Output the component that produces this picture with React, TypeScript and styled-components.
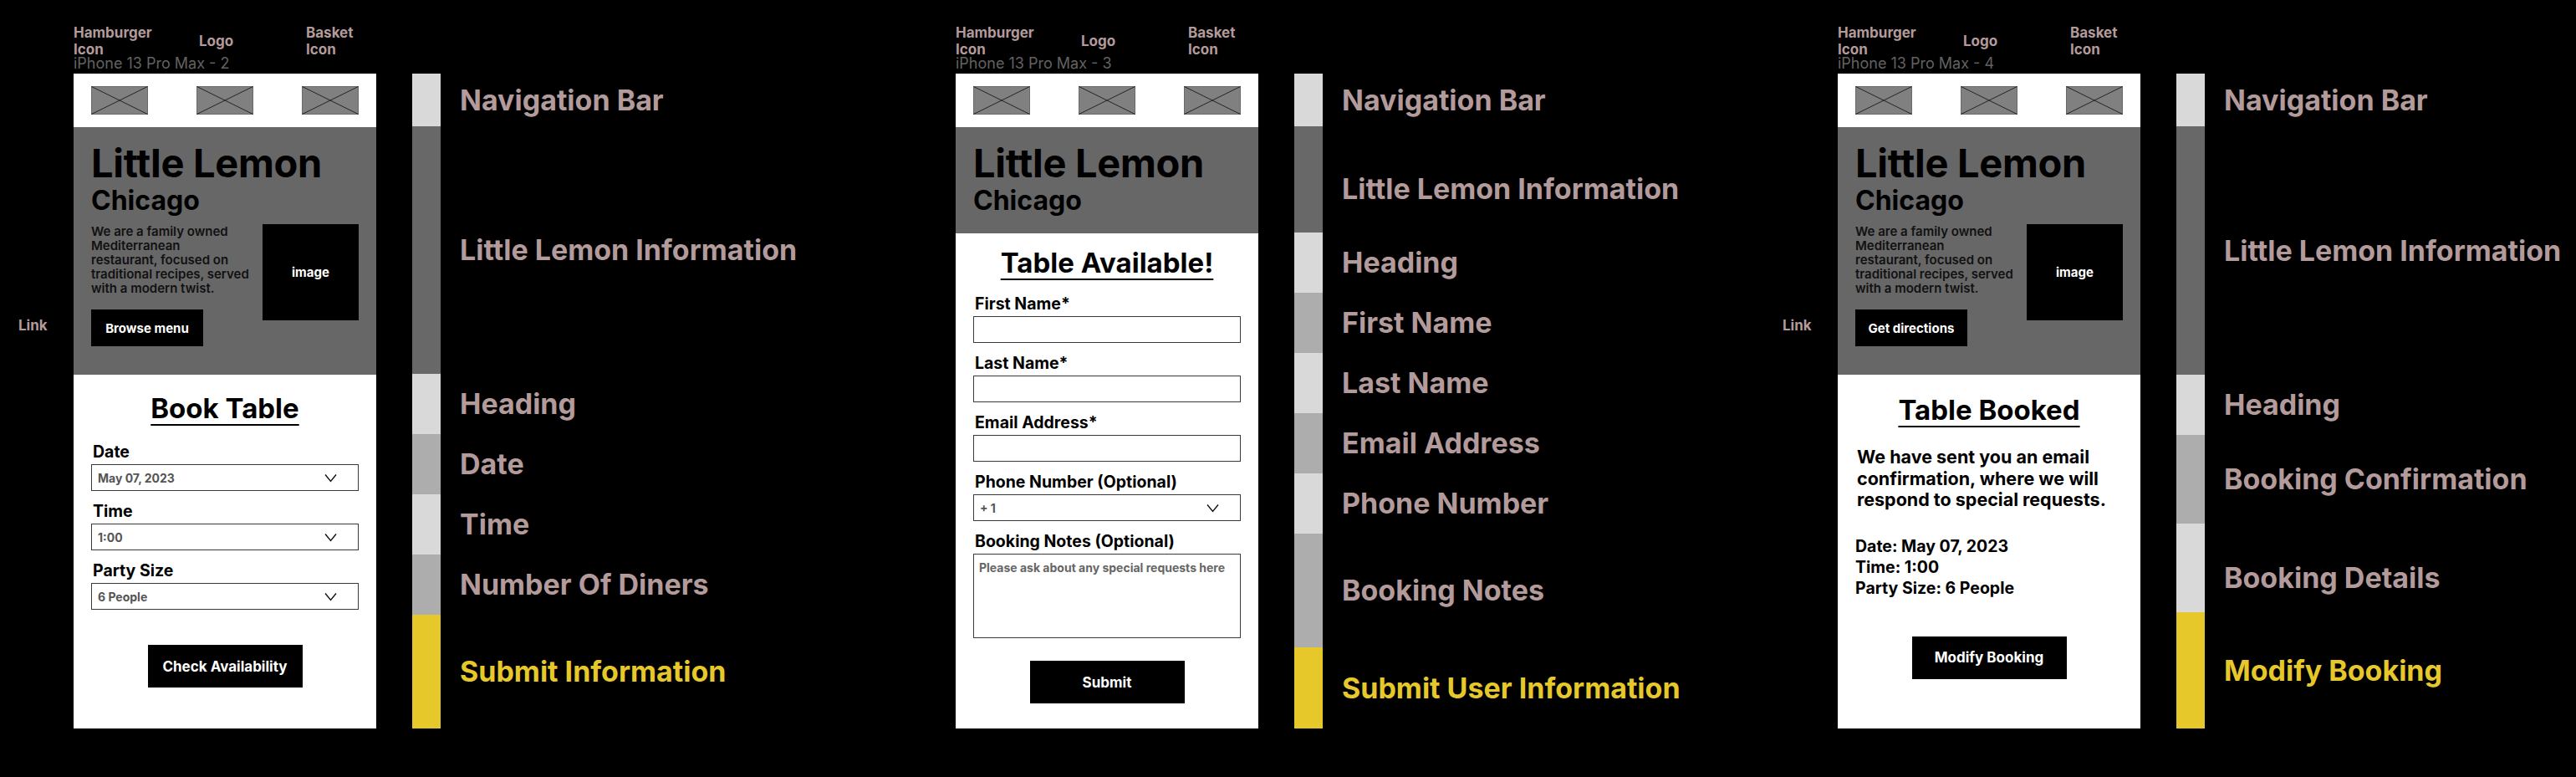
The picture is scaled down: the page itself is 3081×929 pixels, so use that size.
import React from "react";
import styled, { createGlobalStyle } from "styled-components";

const LABEL = "#b39a9b";
const YELLOW = "#e6c82b";
const LIGHT = "#d9d9d9";
const DARK = "#686868";
const MID = "#adadad";

const GlobalStyle = createGlobalStyle`
  html, body {
    margin: 0;
    padding: 0;
    background: #000;
  }
  body {
    font-family: Inter, "Noto Sans", Arial, sans-serif;
    overflow: hidden;
  }
  * {
    box-sizing: border-box;
  }
`;

// shift: how far the label sits below the middle of its segment
type Segment = { label: string; height: number; color: string; accent?: boolean; shift?: number };

const legends: Segment[][] = [
  [
    { label: "Navigation Bar", height: 63, color: LIGHT },
    { label: "Little Lemon Information", height: 296, color: DARK },
    { label: "Heading", height: 72, color: LIGHT },
    { label: "Date", height: 72, color: MID },
    { label: "Time", height: 72, color: LIGHT },
    { label: "Number Of Diners", height: 72, color: MID },
    { label: "Submit Information", height: 136, color: YELLOW, accent: true },
  ],
  [
    { label: "Navigation Bar", height: 63, color: LIGHT },
    { label: "Little Lemon Information", height: 127, color: DARK, shift: 11 },
    { label: "Heading", height: 72, color: LIGHT },
    { label: "First Name", height: 72, color: MID },
    { label: "Last Name", height: 72, color: LIGHT },
    { label: "Email Address", height: 72, color: MID },
    { label: "Phone Number", height: 72, color: LIGHT },
    { label: "Booking Notes", height: 136, color: MID },
    { label: "Submit User Information", height: 97, color: YELLOW, accent: true },
  ],
  [
    { label: "Navigation Bar", height: 63, color: LIGHT },
    { label: "Little Lemon Information", height: 297, color: DARK },
    { label: "Heading", height: 72, color: LIGHT },
    { label: "Booking Confirmation", height: 106, color: MID },
    { label: "Booking Details", height: 106, color: LIGHT, shift: 12 },
    { label: "Modify Booking", height: 139, color: YELLOW, accent: true },
  ],
];

const Placeholder = () => (
  <svg width="68" height="34" viewBox="0 0 68 34">
    <rect x="0.5" y="0.5" width="67" height="33" fill="#808080" stroke="#6a6a6a" />
    <line x1="0.5" y1="0.5" x2="67.5" y2="33.5" stroke="#1a1a1a" strokeWidth="0.9" />
    <line x1="67.5" y1="0.5" x2="0.5" y2="33.5" stroke="#1a1a1a" strokeWidth="0.9" />
  </svg>
);

const Chevron = () => (
  <svg width="15" height="11" viewBox="0 0 15 11">
    <path d="M1 1.5 L7.5 9.5 L14 1.5" fill="none" stroke="#111" strokeWidth="1.4" />
  </svg>
);

const Header = ({ index }: { index: number }) => (
  <HeaderArea>
    <Annotations>
      <span>{"Hamburger\nIcon"}</span>
      <span>Logo</span>
      <span>{"Basket\nIcon"}</span>
    </Annotations>
    <FrameName>iPhone 13 Pro Max - {index}</FrameName>
  </HeaderArea>
);

const Nav = () => (
  <NavBar>
    <Placeholder />
    <Placeholder />
    <Placeholder />
  </NavBar>
);

const FullHero = ({ action }: { action: string }) => (
  <Hero $pb={34}>
    <Title>Little Lemon</Title>
    <City>Chicago</City>
    <HeroRow>
      <HeroText>
        <Blurb>
          We are a family owned
          <br />
          Mediterranean
          <br />
          restaurant, focused on
          <br />
          traditional recipes, served
          <br />
          with a modern twist.
        </Blurb>
        <HeroButton>{action}</HeroButton>
      </HeroText>
      <ImageBox>image</ImageBox>
    </HeroRow>
  </Hero>
);

const SelectField = ({ label, value }: { label: string; value: string }) => (
  <Field>
    <FieldLabel>{label}</FieldLabel>
    <InputBox>
      <span>{value}</span>
      <Chevron />
    </InputBox>
  </Field>
);

const TextField = ({ label }: { label: string }) => (
  <Field>
    <FieldLabel>{label}</FieldLabel>
    <InputBox />
  </Field>
);

const Legend = ({ items }: { items: Segment[] }) => (
  <LegendList>
    {items.map((item) => (
      <LegendItem key={item.label} $h={item.height}>
        <Swatch $color={item.color} />
        <LegendText $accent={item.accent} $shift={item.shift ?? 0}>
          {item.label}
        </LegendText>
      </LegendItem>
    ))}
  </LegendList>
);

const App = () => {
  return (
    <>
      <GlobalStyle />
      <Page>
        {/* Book table */}
        <Board>
          <LinkSlot>Link</LinkSlot>
          <FrameColumn>
            <Header index={2} />
            <Frame>
              <Nav />
              <FullHero action="Browse menu" />
              <Content $pt={20}>
                <Heading>Book Table</Heading>
                <Fields $mt={21}>
                  <SelectField label="Date" value="May 07, 2023" />
                  <SelectField label="Time" value="1:00" />
                  <SelectField label="Party Size" value="6 People" />
                </Fields>
                <ActionButton $mt={42}>Check Availability</ActionButton>
              </Content>
            </Frame>
          </FrameColumn>
          <Legend items={legends[0]} />
        </Board>

        {/* Details form */}
        <Board>
          <LinkSlot />
          <FrameColumn>
            <Header index={3} />
            <Frame>
              <Nav />
              <Hero $pb={23}>
                <Title>Little Lemon</Title>
                <City>Chicago</City>
              </Hero>
              <Content $pt={15}>
                <Heading>Table Available!</Heading>
                <Fields $mt={18}>
                  <TextField label="First Name*" />
                  <TextField label="Last Name*" />
                  <TextField label="Email Address*" />
                  <SelectField label="Phone Number (Optional)" value="+ 1" />
                  <Field>
                    <FieldLabel>Booking Notes (Optional)</FieldLabel>
                    <NotesBox>Please ask about any special requests here</NotesBox>
                  </Field>
                </Fields>
                <ActionButton $mt={27}>Submit</ActionButton>
              </Content>
            </Frame>
          </FrameColumn>
          <Legend items={legends[1]} />
        </Board>

        {/* Confirmation */}
        <Board>
          <LinkSlot>Link</LinkSlot>
          <FrameColumn>
            <Header index={4} />
            <Frame>
              <Nav />
              <FullHero action="Get directions" />
              <Content $pt={22}>
                <Heading>Table Booked</Heading>
                <Confirmation>
                  We have sent you an email confirmation, where we will respond
                  to special requests.
                </Confirmation>
                <Details>
                  Date: May 07, 2023
                  <br />
                  Time: 1:00
                  <br />
                  Party Size: 6 People
                </Details>
                <ActionButton $mt={45}>Modify Booking</ActionButton>
              </Content>
            </Frame>
          </FrameColumn>
          <Legend items={legends[2]} />
        </Board>
      </Page>
    </>
  );
};

const Page = styled.main`
  display: flex;
  width: 3081px;
  height: 929px;
  padding-left: 22px;
  overflow: hidden;
`;

const Board = styled.section`
  flex: 0 0 1055px;
  display: flex;
  align-items: flex-start;
`;

const LinkSlot = styled.div`
  flex: 0 0 66px;
  padding-top: 379px;
  font-size: 17px;
  font-weight: 700;
  line-height: 20px;
  color: ${LABEL};
`;

const FrameColumn = styled.div`
  flex: 0 0 362px;
  display: flex;
  flex-direction: column;
`;

const HeaderArea = styled.header`
  height: 88px;
  display: grid;
  & > * {
    grid-area: 1 / 1;
  }
`;

const Annotations = styled.div`
  align-self: start;
  display: grid;
  grid-template-columns: 150px 128px 1fr;
  align-items: center;
  padding-top: 29px;
  font-size: 17px;
  font-weight: 700;
  line-height: 20px;
  color: ${LABEL};
  white-space: pre-line;
`;

const FrameName = styled.div`
  align-self: end;
  margin-bottom: 2px;
  font-size: 18px;
  line-height: 20px;
  color: #626262;
`;

const Frame = styled.div`
  height: 783px;
  background: #fff;
  display: flex;
  flex-direction: column;
  overflow: hidden;
`;

const NavBar = styled.nav`
  flex: 0 0 64px;
  display: flex;
  justify-content: space-between;
  align-items: center;
  padding: 0 21px;
`;

const Hero = styled.div<{ $pb: number }>`
  background: #676767;
  padding: 19px 21px ${({ $pb }) => $pb}px;
  color: #000;
`;

const Title = styled.h1`
  margin: 0;
  font-size: 47px;
  line-height: 47px;
  font-weight: 700;
  letter-spacing: -0.3px;
`;

const City = styled.h2`
  margin: 6px 0 0;
  font-size: 32px;
  line-height: 32px;
  font-weight: 700;
`;

const HeroRow = styled.div`
  display: flex;
  justify-content: space-between;
  align-items: flex-start;
  margin-top: 12px;
`;

const HeroText = styled.div`
  display: flex;
  flex-direction: column;
  align-items: flex-start;
`;

const Blurb = styled.p`
  margin: 0;
  font-size: 15px;
  line-height: 17px;
  font-weight: 600;
  color: #111;
`;

const HeroButton = styled.button`
  margin-top: 17px;
  width: 134px;
  height: 44px;
  border: none;
  background: #000;
  color: #fff;
  font-family: inherit;
  font-size: 15px;
  font-weight: 700;
`;

const ImageBox = styled.div`
  width: 115px;
  height: 115px;
  background: #000;
  color: #fff;
  display: flex;
  align-items: center;
  justify-content: center;
  font-size: 15px;
  font-weight: 700;
`;

const Content = styled.div<{ $pt: number }>`
  padding: ${({ $pt }) => $pt}px 21px 0;
  display: flex;
  flex-direction: column;
  color: #000;
`;

const Heading = styled.h3`
  margin: 0;
  text-align: center;
  font-size: 33px;
  line-height: 40px;
  font-weight: 700;
  text-decoration: underline;
  text-decoration-thickness: 2px;
  text-underline-offset: 7px;
`;

const Fields = styled.div<{ $mt: number }>`
  margin-top: ${({ $mt }) => $mt}px;
  display: flex;
  flex-direction: column;
  gap: 13px;
`;

const Field = styled.div`
  display: flex;
  flex-direction: column;
  gap: 4px;
`;

const FieldLabel = styled.label`
  padding-left: 2px;
  font-size: 19.5px;
  line-height: 22px;
  font-weight: 700;
`;

const InputBox = styled.div`
  height: 32px;
  border: 1.5px solid #3a3a3a;
  display: flex;
  align-items: center;
  justify-content: space-between;
  padding: 0 25px 0 7px;
  font-size: 14px;
  font-weight: 700;
  color: #555;
`;

const NotesBox = styled.div`
  height: 101px;
  border: 1.5px solid #3a3a3a;
  padding: 7px 6px;
  font-size: 14px;
  font-weight: 700;
  color: #666;
  white-space: nowrap;
  overflow: hidden;
`;

const ActionButton = styled.button<{ $mt: number }>`
  align-self: center;
  margin-top: ${({ $mt }) => $mt}px;
  width: 185px;
  height: 51px;
  border: none;
  background: #000;
  color: #fff;
  font-family: inherit;
  font-size: 17px;
  font-weight: 700;
`;

const Confirmation = styled.p`
  margin: 24px 0 0;
  padding-left: 2px;
  max-width: 318px;
  font-size: 21.5px;
  line-height: 25.5px;
  font-weight: 700;
`;

const Details = styled.p`
  margin: 30px 0 0;
  font-size: 19.5px;
  line-height: 25px;
  font-weight: 700;
`;

const LegendList = styled.ul`
  list-style: none;
  margin: 88px 0 0 43px;
  padding: 0;
  display: flex;
  flex-direction: column;
`;

const LegendItem = styled.li<{ $h: number }>`
  height: ${({ $h }) => $h}px;
  display: flex;
  align-items: center;
`;

const Swatch = styled.span<{ $color: string }>`
  align-self: stretch;
  flex: 0 0 34px;
  background: ${({ $color }) => $color};
`;

const LegendText = styled.span<{ $accent?: boolean; $shift: number }>`
  margin-left: 23px;
  padding-top: ${({ $shift }) => $shift * 2}px;
  font-size: 34px;
  line-height: 40px;
  font-weight: 700;
  white-space: nowrap;
  color: ${({ $accent }) => ($accent ? YELLOW : LABEL)};
`;

export default App;
